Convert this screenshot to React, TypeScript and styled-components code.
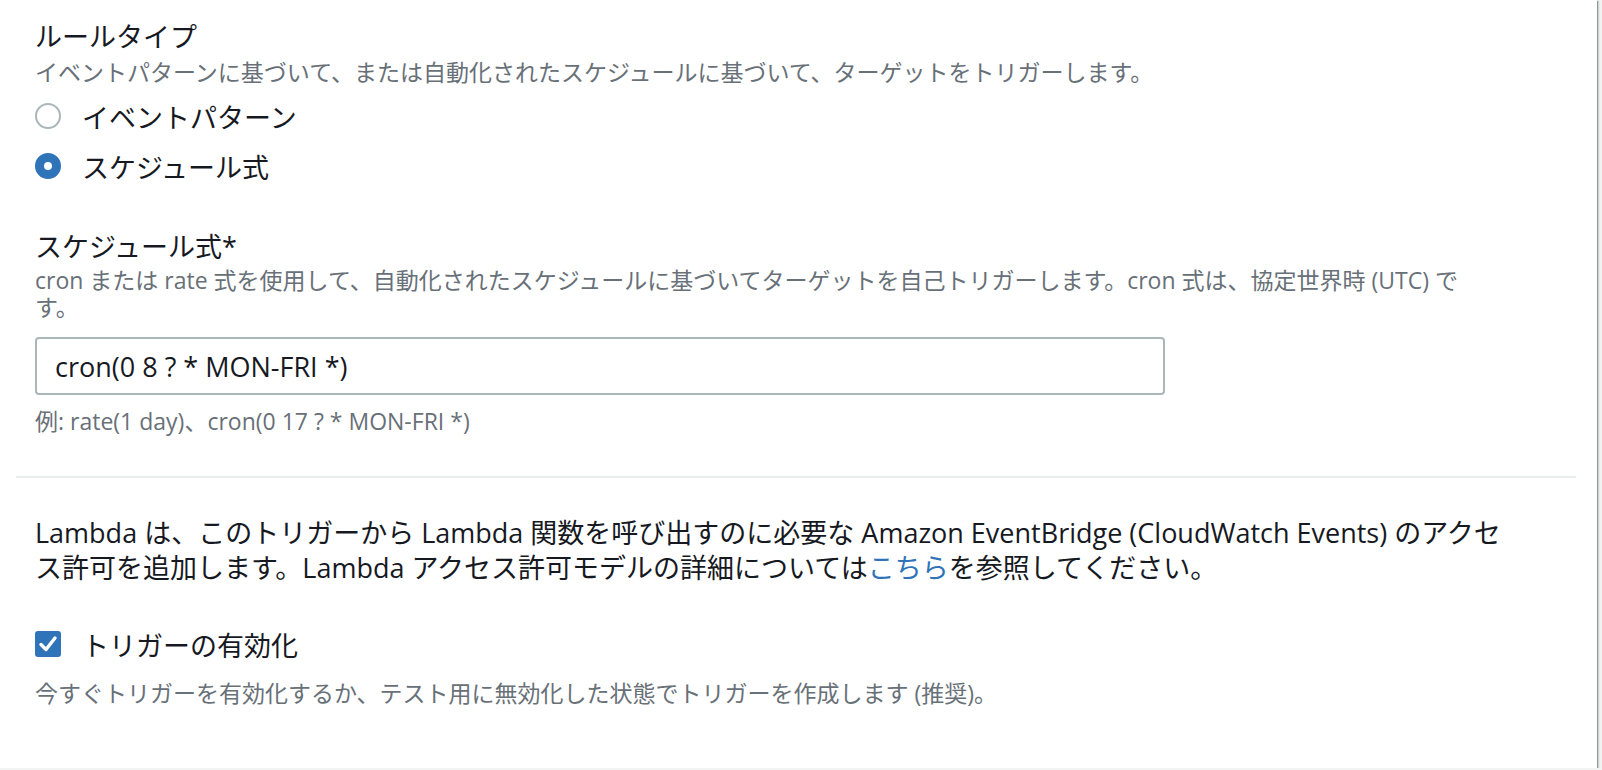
import styled, { createGlobalStyle } from "styled-components";

const GlobalStyle = createGlobalStyle`
  html, body {
    margin: 0;
    padding: 0;
    background: #f2f3f3;
    overflow: hidden;
  }
  body {
    font-family: "Open Sans", "Noto Sans CJK JP", sans-serif;
    color: #16191f;
  }
`;

const Card = styled.section`
  width: 1597px;
  height: 768px;
  box-sizing: border-box;
  background: #ffffff;
  box-shadow: 1px 1px 1px 0 rgba(0, 28, 36, 0.35), 2px 1px 2px 0 rgba(0, 28, 36, 0.12);
  padding: 19px 21px 0 16px;
  display: flex;
  flex-direction: column;
`;

const Section = styled.div`
  padding: 0 60px 0 19px;
  display: flex;
  flex-direction: column;
`;

const Label = styled.div`
  font-size: 27px;
  line-height: 36px;
  color: #16191f;
`;

const Desc = styled.div<{ $width?: number }>`
  font-size: 23px;
  line-height: 28px;
  color: #687078;
  max-width: ${(p) => (p.$width ? `${p.$width}px` : "none")};
`;

const RuleDesc = styled(Desc)`
  margin-top: 3px;
`;

const OptionList = styled.div`
  display: flex;
  flex-direction: column;
  gap: 10px;
  margin-top: 10px;
`;

const OptionRow = styled.label`
  display: flex;
  align-items: center;
  gap: 21px;
  height: 40px;
  font-size: 27px;
  color: #16191f;
  cursor: pointer;
`;

const Radio = styled.span<{ $checked?: boolean }>`
  width: 26px;
  height: 26px;
  box-sizing: border-box;
  border-radius: 50%;
  border: ${(p) => (p.$checked ? "9px solid #2f73b8" : "2.5px solid #aab7b8")};
  background: #ffffff;
  flex-shrink: 0;
`;

const Field = styled.div`
  display: flex;
  flex-direction: column;
  margin-top: 43px;
`;

const FieldDesc = styled(Desc)`
  margin-top: 2px;
  line-height: 27px;
`;

const Input = styled.input`
  margin-top: 16px;
  width: 1130px;
  height: 58px;
  box-sizing: border-box;
  border: 2px solid #aab7b8;
  border-radius: 4px;
  padding: 0 18px;
  font-family: "Open Sans", "Noto Sans CJK JP", sans-serif;
  font-size: 27px;
  color: #16191f;
  outline: none;
  background: #ffffff;
`;

const Example = styled(Desc)`
  margin-top: 11px;
  line-height: 30px;
`;

const Divider = styled.hr`
  border: none;
  height: 2px;
  background: #eaeded;
  margin: 40px 0 0 0;
`;

const Paragraph = styled.p`
  margin: 37px 0 0 0;
  font-size: 27px;
  line-height: 35px;
  color: #16191f;
`;

const Link = styled.a`
  color: #2f73b8;
  text-decoration: none;
`;

const CheckField = styled.div`
  display: flex;
  flex-direction: column;
  margin-top: 39px;
`;

const CheckBox = styled.span`
  width: 26px;
  height: 26px;
  border-radius: 3px;
  background: #2f73b8;
  display: flex;
  align-items: center;
  justify-content: center;
  flex-shrink: 0;
`;

const CheckDesc = styled(Desc)`
  margin-top: 14px;
  line-height: 30px;
`;

export default function App() {
  return (
    <>
      <GlobalStyle />
      <Card>
        <Section>
          <Label>ルールタイプ</Label>
          <RuleDesc>イベントパターンに基づいて、または自動化されたスケジュールに基づいて、ターゲットをトリガーします。</RuleDesc>
          <OptionList>
            <OptionRow>
              <Radio />
              イベントパターン
            </OptionRow>
            <OptionRow>
              <Radio $checked />
              スケジュール式
            </OptionRow>
          </OptionList>
          <Field>
            <Label>スケジュール式*</Label>
            <FieldDesc $width={1460}>
              cron または rate 式を使用して、自動化されたスケジュールに基づいてターゲットを自己トリガーします。cron 式は、協定世界時 (UTC) です。
            </FieldDesc>
            <Input defaultValue="cron(0 8 ? * MON-FRI *)" />
            <Example>例: rate(1 day)、cron(0 17 ? * MON-FRI *)</Example>
          </Field>
        </Section>
        <Divider />
        <Section>
          <Paragraph>
            Lambda は、このトリガーから Lambda 関数を呼び出すのに必要な Amazon EventBridge (CloudWatch Events) のアクセス許可を追加します。Lambda アクセス許可モデルの詳細については<Link href="#">こちら</Link>を参照してください。
          </Paragraph>
          <CheckField>
            <OptionRow>
              <CheckBox>
                <svg width="20" height="18" viewBox="0 0 20 18">
                  <path d="M3 9.5 L8 14.5 L17 3" fill="none" stroke="#ffffff" strokeWidth="3.4" strokeLinecap="round" strokeLinejoin="round" />
                </svg>
              </CheckBox>
              トリガーの有効化
            </OptionRow>
            <CheckDesc>今すぐトリガーを有効化するか、テスト用に無効化した状態でトリガーを作成します (推奨)。</CheckDesc>
          </CheckField>
        </Section>
      </Card>
    </>
  );
}
